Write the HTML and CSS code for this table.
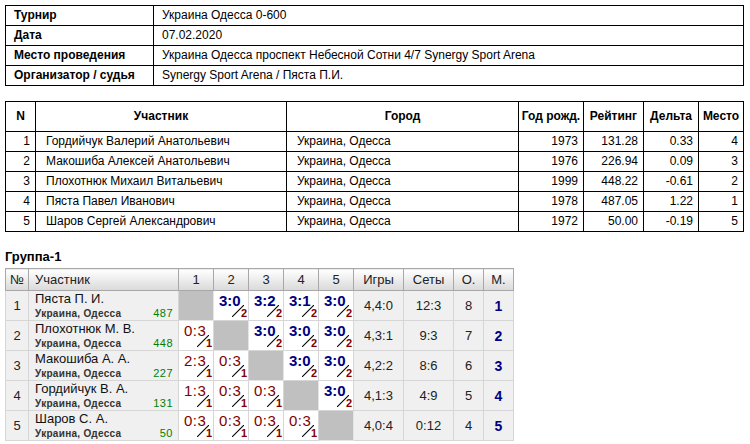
FILE: index.html
```html
<!DOCTYPE html>
<html>
<head>
<meta charset="utf-8">
<link rel="stylesheet" href="styles.css">
</head>
<body>
<table class="info">
  <tr><td class="k">Турнир</td><td>Украина Одесса 0-600</td></tr>
  <tr><td class="k">Дата</td><td>07.02.2020</td></tr>
  <tr><td class="k">Место проведения</td><td>Украина Одесса проспект Небесной Сотни 4/7 Synergy Sport Arena</td></tr>
  <tr><td class="k">Организатор / судья</td><td>Synergy Sport Arena / Пяста П.И.</td></tr>
</table>

<table class="list">
  <colgroup><col class="c-n"><col class="c-name"><col class="c-city"><col class="c-year"><col class="c-rate"><col class="c-delta"><col class="c-place"></colgroup>
  <tr class="hd"><th>N</th><th>Участник</th><th>Город</th><th>Год рожд.</th><th>Рейтинг</th><th>Дельта</th><th>Место</th></tr>
  <tr><td class="r">1</td><td class="l">Гордийчук Валерий Анатольевич</td><td class="l">Украина, Одесса</td><td class="r">1973</td><td class="r">131.28</td><td class="r">0.33</td><td class="r">4</td></tr>
  <tr><td class="r">2</td><td class="l">Макошиба Алексей Анатольевич</td><td class="l">Украина, Одесса</td><td class="r">1976</td><td class="r">226.94</td><td class="r">0.09</td><td class="r">3</td></tr>
  <tr><td class="r">3</td><td class="l">Плохотнюк Михаил Витальевич</td><td class="l">Украина, Одесса</td><td class="r">1999</td><td class="r">448.22</td><td class="r">-0.61</td><td class="r">2</td></tr>
  <tr><td class="r">4</td><td class="l">Пяста Павел Иванович</td><td class="l">Украина, Одесса</td><td class="r">1978</td><td class="r">487.05</td><td class="r">1.22</td><td class="r">1</td></tr>
  <tr><td class="r">5</td><td class="l">Шаров Сергей Александрович</td><td class="l">Украина, Одесса</td><td class="r">1972</td><td class="r">50.00</td><td class="r">-0.19</td><td class="r">5</td></tr>
</table>

<div class="gtitle">Группа-1</div>
<table class="grp">
  <colgroup><col class="g-n"><col class="g-name"><col class="g-s"><col class="g-s"><col class="g-s"><col class="g-s"><col class="g-s"><col class="g-games"><col class="g-sets"><col class="g-o"><col class="g-m"></colgroup>
  <tr class="ghd"><th>№</th><th class="tl">Участник</th><th>1</th><th>2</th><th>3</th><th>4</th><th>5</th><th>Игры</th><th>Сеты</th><th>О.</th><th>М.</th></tr>
  <tr>
    <td class="num">1</td>
    <td class="pl"><div class="pn">Пяста П. И.</div><div class="pc"><span>Украина, Одесса</span><span class="rt">487</span></div></td>
    <td class="x"></td>
    <td class="s"><div class="sw"><span class="win">3:0</span><svg class="ln" viewBox="0 0 12 12"><line x1="0" y1="12" x2="12" y2="0"/></svg><span class="pt">2</span></div></td>
    <td class="s"><div class="sw"><span class="win">3:2</span><svg class="ln" viewBox="0 0 12 12"><line x1="0" y1="12" x2="12" y2="0"/></svg><span class="pt">2</span></div></td>
    <td class="s"><div class="sw"><span class="win">3:1</span><svg class="ln" viewBox="0 0 12 12"><line x1="0" y1="12" x2="12" y2="0"/></svg><span class="pt">2</span></div></td>
    <td class="s"><div class="sw"><span class="win">3:0</span><svg class="ln" viewBox="0 0 12 12"><line x1="0" y1="12" x2="12" y2="0"/></svg><span class="pt">2</span></div></td>
    <td class="v">4,4:0</td><td class="v">12:3</td><td class="v">8</td><td class="v m">1</td>
  </tr>
  <tr>
    <td class="num">2</td>
    <td class="pl"><div class="pn">Плохотнюк М. В.</div><div class="pc"><span>Украина, Одесса</span><span class="rt">448</span></div></td>
    <td class="s"><div class="sw"><span class="loss">0:3</span><svg class="ln" viewBox="0 0 12 12"><line x1="0" y1="12" x2="12" y2="0"/></svg><span class="pt">1</span></div></td>
    <td class="x"></td>
    <td class="s"><div class="sw"><span class="win">3:0</span><svg class="ln" viewBox="0 0 12 12"><line x1="0" y1="12" x2="12" y2="0"/></svg><span class="pt">2</span></div></td>
    <td class="s"><div class="sw"><span class="win">3:0</span><svg class="ln" viewBox="0 0 12 12"><line x1="0" y1="12" x2="12" y2="0"/></svg><span class="pt">2</span></div></td>
    <td class="s"><div class="sw"><span class="win">3:0</span><svg class="ln" viewBox="0 0 12 12"><line x1="0" y1="12" x2="12" y2="0"/></svg><span class="pt">2</span></div></td>
    <td class="v">4,3:1</td><td class="v">9:3</td><td class="v">7</td><td class="v m">2</td>
  </tr>
  <tr>
    <td class="num">3</td>
    <td class="pl"><div class="pn">Макошиба А. А.</div><div class="pc"><span>Украина, Одесса</span><span class="rt">227</span></div></td>
    <td class="s"><div class="sw"><span class="loss">2:3</span><svg class="ln" viewBox="0 0 12 12"><line x1="0" y1="12" x2="12" y2="0"/></svg><span class="pt">1</span></div></td>
    <td class="s"><div class="sw"><span class="loss">0:3</span><svg class="ln" viewBox="0 0 12 12"><line x1="0" y1="12" x2="12" y2="0"/></svg><span class="pt">1</span></div></td>
    <td class="x"></td>
    <td class="s"><div class="sw"><span class="win">3:0</span><svg class="ln" viewBox="0 0 12 12"><line x1="0" y1="12" x2="12" y2="0"/></svg><span class="pt">2</span></div></td>
    <td class="s"><div class="sw"><span class="win">3:0</span><svg class="ln" viewBox="0 0 12 12"><line x1="0" y1="12" x2="12" y2="0"/></svg><span class="pt">2</span></div></td>
    <td class="v">4,2:2</td><td class="v">8:6</td><td class="v">6</td><td class="v m">3</td>
  </tr>
  <tr>
    <td class="num">4</td>
    <td class="pl"><div class="pn">Гордийчук В. А.</div><div class="pc"><span>Украина, Одесса</span><span class="rt">131</span></div></td>
    <td class="s"><div class="sw"><span class="loss">1:3</span><svg class="ln" viewBox="0 0 12 12"><line x1="0" y1="12" x2="12" y2="0"/></svg><span class="pt">1</span></div></td>
    <td class="s"><div class="sw"><span class="loss">0:3</span><svg class="ln" viewBox="0 0 12 12"><line x1="0" y1="12" x2="12" y2="0"/></svg><span class="pt">1</span></div></td>
    <td class="s"><div class="sw"><span class="loss">0:3</span><svg class="ln" viewBox="0 0 12 12"><line x1="0" y1="12" x2="12" y2="0"/></svg><span class="pt">1</span></div></td>
    <td class="x"></td>
    <td class="s"><div class="sw"><span class="win">3:0</span><svg class="ln" viewBox="0 0 12 12"><line x1="0" y1="12" x2="12" y2="0"/></svg><span class="pt">2</span></div></td>
    <td class="v">4,1:3</td><td class="v">4:9</td><td class="v">5</td><td class="v m">4</td>
  </tr>
  <tr>
    <td class="num">5</td>
    <td class="pl"><div class="pn">Шаров С. А.</div><div class="pc"><span>Украина, Одесса</span><span class="rt">50</span></div></td>
    <td class="s"><div class="sw"><span class="loss">0:3</span><svg class="ln" viewBox="0 0 12 12"><line x1="0" y1="12" x2="12" y2="0"/></svg><span class="pt">1</span></div></td>
    <td class="s"><div class="sw"><span class="loss">0:3</span><svg class="ln" viewBox="0 0 12 12"><line x1="0" y1="12" x2="12" y2="0"/></svg><span class="pt">1</span></div></td>
    <td class="s"><div class="sw"><span class="loss">0:3</span><svg class="ln" viewBox="0 0 12 12"><line x1="0" y1="12" x2="12" y2="0"/></svg><span class="pt">1</span></div></td>
    <td class="s"><div class="sw"><span class="loss">0:3</span><svg class="ln" viewBox="0 0 12 12"><line x1="0" y1="12" x2="12" y2="0"/></svg><span class="pt">1</span></div></td>
    <td class="x"></td>
    <td class="v">4,0:4</td><td class="v">0:12</td><td class="v">4</td><td class="v m">5</td>
  </tr>
</table>
</body>
</html>
```

FILE: styles.css
```css
html, body {
  margin: 0;
  padding: 0;
  background: #ffffff;
}
body {
  padding: 5px;
  font-family: "Liberation Sans", Arial, sans-serif;
  font-size: 12px;
  color: #000;
}
table {
  border-collapse: collapse;
  border-spacing: 0;
}
.info {
  width: 739px;
  border: 1px solid #000;
}
.info td {
  border: 1px solid #000;
  height: 19px;
  padding: 0 8px;
  line-height: 17px;
}
.info td.k {
  width: 131px;
  font-weight: bold;
}
.list {
  margin-top: 15px;
  width: 739px;
  table-layout: fixed;
  border: 1px solid #000;
}
.list td, .list th {
  border: 1px solid #000;
  height: 19px;
  padding: 0 5px;
  line-height: 17px;
  white-space: nowrap;
}
.list .hd th {
  height: 29px;
  font-weight: bold;
  text-align: center;
  padding: 0 2px;
}
.list td.r { text-align: right; }
.list td.l { padding-left: 10px; }
.c-n { width: 30px; }
.c-name { width: 251px; }
.c-city { width: 232px; }
.c-year { width: 65px; }
.c-rate { width: 60px; }
.c-delta { width: 55px; }
.c-place { width: 45px; }

.gtitle {
  margin-top: 17px;
  font-weight: bold;
  font-size: 13px;
  line-height: 16px;
}
.grp {
  margin-top: 3px;
  width: 508px;
  table-layout: fixed;
  border: 1px solid #a8a8a8;
  font-size: 13px;
}
.g-n { width: 23px; }
.g-name { width: 150px; }
.g-s { width: 35px; }
.g-games { width: 50px; }
.g-sets { width: 50px; }
.g-o { width: 30px; }
.g-m { width: 30px; }
.grp th {
  height: 21px;
  padding: 0;
  font-weight: normal;
  color: #222;
  background: linear-gradient(#ffffff, #d9d9d9);
  border: 1px solid #a8a8a8;
  text-align: center;
}
.grp th.tl {
  text-align: left;
  padding-left: 6px;
}
.grp td {
  height: 29px;
  padding: 0;
  border: 1px solid #d6d6d6;
  background: #f0f0f0;
  vertical-align: middle;
}
.grp td.num {
  text-align: center;
  color: #222;
}
.grp td.pl {
  padding: 0 5px 0 6px;
}
.pn {
  line-height: 15px;
  color: #111;
}
.pc {
  display: flex;
  justify-content: space-between;
  font-size: 10px;
  font-weight: bold;
  letter-spacing: 0.3px;
  color: #333;
  line-height: 13px;
  margin-top: 1px;
}
.pc .rt {
  color: #008000;
  font-weight: normal;
  font-size: 11px;
  letter-spacing: 0.5px;
}
.grp td.x {
  background: #c0c0c0;
  border-color: #e4e4e4;
}
.grp td.s {
  background: #ffffff;
}
.sw {
  position: relative;
  height: 29px;
}
.sw .win, .sw .loss {
  position: absolute;
  left: 5px;
  top: 2px;
  font-size: 15px;
  line-height: 16px;
}
.sw .win {
  font-weight: bold;
  color: #000080;
}
.sw .loss {
  color: #800000;
  letter-spacing: 0.5px;
}
.sw .ln {
  position: absolute;
  left: 18px;
  top: 14px;
  width: 12px;
  height: 12px;
}
.sw .ln line {
  stroke: #000;
  stroke-width: 1.1;
}
.sw .pt {
  position: absolute;
  right: 1px;
  bottom: 1px;
  font-size: 11px;
  font-weight: bold;
  line-height: 11px;
  color: #800000;
}
.grp td.v {
  text-align: center;
  color: #222;
}
.grp td.m {
  font-weight: bold;
  font-size: 14px;
  color: #000080;
}
```
